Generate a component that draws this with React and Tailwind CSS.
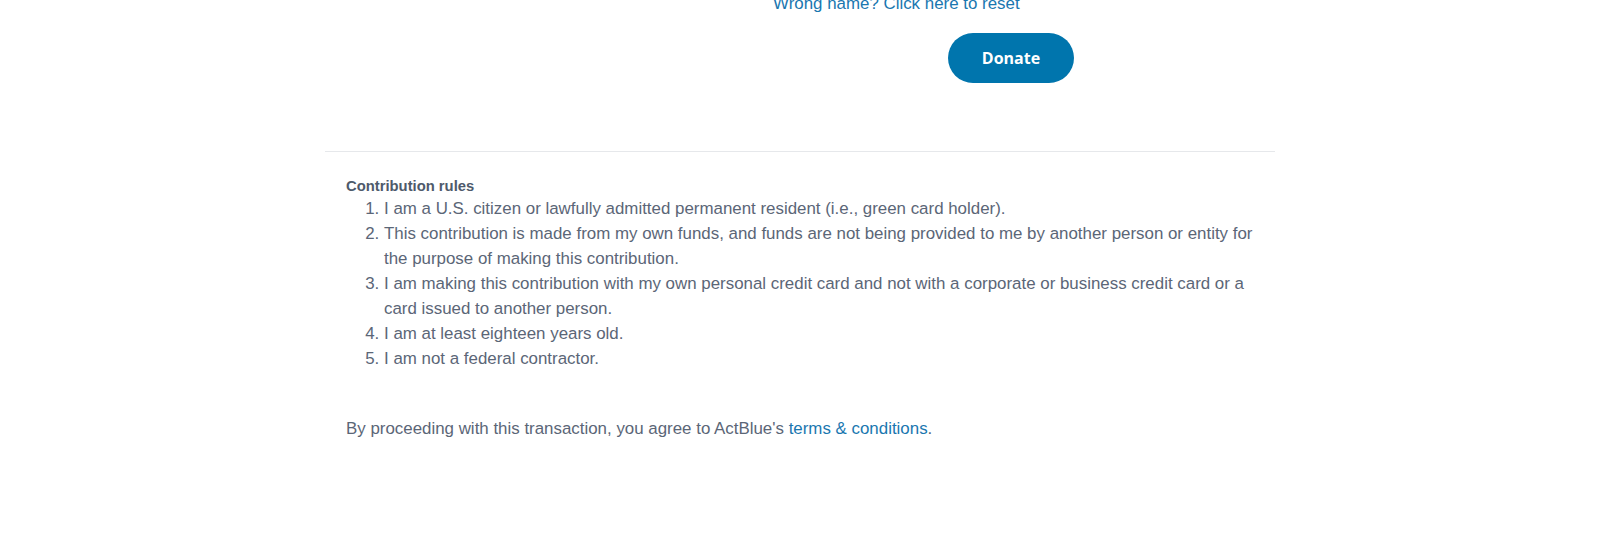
export default function App() {
  const rules = [
    'I am a U.S. citizen or lawfully admitted permanent resident (i.e., green card holder).',
    'This contribution is made from my own funds, and funds are not being provided to me by another person or entity for the purpose of making this contribution.',
    'I am making this contribution with my own personal credit card and not with a corporate or business credit card or a card issued to another person.',
    'I am at least eighteen years old.',
    'I am not a federal contractor.',
  ];

  return (
    <div className="min-h-screen overflow-hidden bg-white font-['Liberation_Sans',Arial,sans-serif] text-[#5b6677]">
      <div className="mx-auto w-[950px]">
        {/* form tail */}
        <div className="-mt-[9px] pb-[68px]">
          <div className="pl-[448px]">
            <a href="#" className="text-[16.9px] leading-[25px] text-[#1a77b0]">
              Wrong name? Click here to reset
            </a>
          </div>
          <div className="mt-[17px] pl-[623px]">
            <button className="h-[50px] w-[126px] rounded-full bg-[#0075ad] font-['Open_Sans',sans-serif] text-[16px] font-bold text-white">
              Donate
            </button>
          </div>
        </div>

        <div className="border-t border-[#e6e8eb] px-[21px] pt-[24px]">
          <h3 className="text-[14.8px] font-bold leading-[20px] text-[#4e5a6b]">Contribution rules</h3>
          <ol className="list-decimal pl-[38px] text-[16.9px] leading-[25px]">
            {rules.map((r, i) => (
              <li key={i}>{r}</li>
            ))}
          </ol>
          <p className="mt-[45px] text-[16.9px] leading-[25px]">
            By proceeding with this transaction, you agree to ActBlue's{' '}
            <a href="#" className="text-[#1a77b0]">
              terms &amp; conditions
            </a>
            .
          </p>
        </div>
      </div>
    </div>
  );
}
